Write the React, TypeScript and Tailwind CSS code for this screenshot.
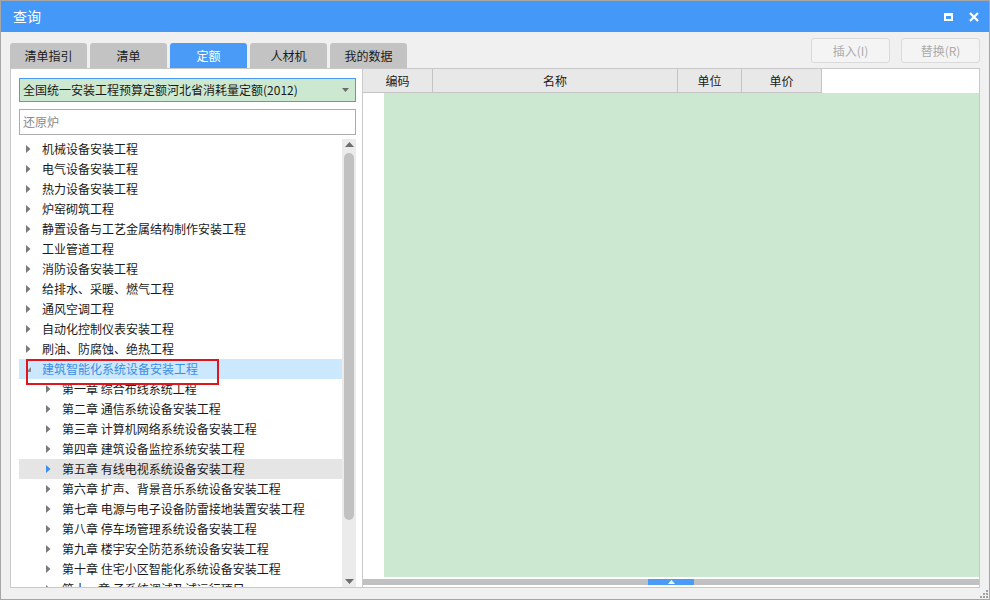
import React from "react";

const font = { fontFamily: '"Noto Sans CJK SC", "Noto Sans", sans-serif' };

const tabs = ["清单指引", "清单", "定额", "人材机", "我的数据"];

const topItems = [
  "机械设备安装工程",
  "电气设备安装工程",
  "热力设备安装工程",
  "炉窑砌筑工程",
  "静置设备与工艺金属结构制作安装工程",
  "工业管道工程",
  "消防设备安装工程",
  "给排水、采暖、燃气工程",
  "通风空调工程",
  "自动化控制仪表安装工程",
  "刷油、防腐蚀、绝热工程",
];

const chapters = [
  "第一章 综合布线系统工程",
  "第二章 通信系统设备安装工程",
  "第三章 计算机网络系统设备安装工程",
  "第四章 建筑设备监控系统安装工程",
  "第五章 有线电视系统设备安装工程",
  "第六章 扩声、背景音乐系统设备安装工程",
  "第七章 电源与电子设备防雷接地装置安装工程",
  "第八章 停车场管理系统设备安装工程",
  "第九章 楼宇安全防范系统设备安装工程",
  "第十章 住宅小区智能化系统设备安装工程",
  "第十一章 子系统调试及试运行项目",
];

function Arrow({ color = "#7a7a7a" }: { color?: string }) {
  return (
    <svg width="5" height="8" viewBox="0 0 5 8" className="shrink-0">
      <path d="M0 0 L4.5 4 L0 8 Z" fill={color} />
    </svg>
  );
}

function TreeRow({ text, level, hover }: { text: string; level: number; hover?: boolean }) {
  return (
    <div
      className={`flex h-[20px] items-center text-[12px] text-[#1a1a1a] ${hover ? "bg-[#e5e5e5]" : ""} ${
        level === 0 ? "pl-[7px]" : "pl-[27px]"
      }`}
    >
      <Arrow color={hover ? "#3c8ff0" : "#7a7a7a"} />
      <span className="ml-[11px] whitespace-nowrap">{text}</span>
    </div>
  );
}

export default function App() {
  return (
    <div
      style={font}
      className="relative flex h-[600px] w-[990px] flex-col overflow-hidden border border-[#a6a6a6] bg-[#f0f0f0]"
    >
      {/* title bar */}
      <div className="flex h-[31px] shrink-0 items-center bg-[#4398f8] pl-[12px] pr-[10px] text-white">
        <span className="text-[14px]">查询</span>
        <div className="ml-auto flex items-center gap-[16px]">
          <div className="h-[8px] w-[9px] border-2 border-t-[3px] border-white" />
          <svg width="10" height="10" viewBox="0 0 10 10">
            <path d="M1 1 L9 9 M9 1 L1 9" stroke="white" strokeWidth="2.2" />
          </svg>
        </div>
      </div>

      {/* toolbar row */}
      <div className="flex h-[36px] shrink-0 items-end pl-[9px] pr-[9px]">
        <div className="flex gap-[3px]">
          {tabs.map((t) => (
            <div
              key={t}
              className={`flex h-[25px] w-[77px] items-center justify-center rounded-t-[3px] text-[12px] ${
                t === "定额" ? "bg-[#4a9bf8] text-white" : "bg-[#c3c3c3] text-[#1a1a1a]"
              }`}
            >
              {t}
            </div>
          ))}
        </div>
        <div className="ml-auto flex gap-[11px] self-start pt-[6px]">
          {["插入(I)", "替换(R)"].map((b) => (
            <div
              key={b}
              className="flex h-[25px] w-[79px] items-center justify-center rounded-[3px] border border-[#dadada] bg-[#f4f4f4] text-[12px] text-[#ababab]"
            >
              {b}
            </div>
          ))}
        </div>
      </div>

      {/* main */}
      <div className="flex h-[520px] shrink-0 pl-[9px] pr-[9px]">
        {/* left panel */}
        <div className="flex w-[352px] flex-col border border-r-0 border-[#c9c9c9] bg-white pl-[8px] pr-[6px] pt-[9px]">
          <div className="flex h-[24px] items-center border border-[#4a9bf8] bg-[#cde8d1] pl-[3px] pr-[6px] text-[12px] text-[#1a1a1a]">
            <span>全国统一安装工程预算定额河北省消耗量定额(2012)</span>
            <svg width="7" height="4" viewBox="0 0 7 4" className="ml-auto">
              <path d="M0 0 H7 L3.5 4 Z" fill="#6a6a6a" />
            </svg>
          </div>
          <div className="mt-[7px] flex h-[26px] items-center border border-[#acacac] pl-[3px] text-[12px] text-[#8a8a8a]">
            还原炉
          </div>
          <div className="mt-[4px] flex min-h-0 flex-1">
            <div className="relative flex-1 overflow-hidden">
              {topItems.map((t) => (
                <TreeRow key={t} text={t} level={0} />
              ))}
              <div className="flex h-[20px] items-center bg-[#cce8ff] pl-[7px] text-[12px] text-[#3a8ee6]">
                <svg width="5" height="5" viewBox="0 0 5 5" className="shrink-0">
                  <path d="M5 0 V5 H0 Z" fill="#8a8a8a" />
                </svg>
                <span className="ml-[11px] whitespace-nowrap">建筑智能化系统设备安装工程</span>
              </div>
              {chapters.map((c) => (
                <TreeRow key={c} text={c} level={1} hover={c.startsWith("第五章")} />
              ))}
              <div className="pointer-events-none absolute left-[7px] top-[220px] h-[26px] w-[193px] border-2 border-[#e0161e]" />
            </div>
            {/* vertical scrollbar */}
            <div className="flex w-[14px] flex-col items-center bg-[#ebebeb] py-[3px]">
              <svg width="9" height="5" viewBox="0 0 9 5">
                <path d="M0 5 L4.5 0 L9 5 Z" fill="#6e6e6e" />
              </svg>
              <div className="mt-[6px] h-[367px] w-[10px] rounded-full bg-[#c1c1c1]" />
              <div className="flex-1" />
              <svg width="9" height="5" viewBox="0 0 9 5">
                <path d="M0 0 H9 L4.5 5 Z" fill="#6e6e6e" />
              </svg>
            </div>
          </div>
        </div>

        {/* right panel */}
        <div className="flex flex-1 flex-col border border-[#c9c9c9] bg-white">
          <div className="flex h-[24px] shrink-0">
            {[
              ["编码", "w-[70px]"],
              ["名称", "w-[245px]"],
              ["单位", "w-[64px]"],
              ["单价", "w-[80px]"],
            ].map(([t, w]) => (
              <div
                key={t}
                className={`${w} flex items-center justify-center border-b border-r border-[#c4c4c4] bg-[#e8e8e8] text-[12px] text-[#1a1a1a]`}
              >
                {t}
              </div>
            ))}
          </div>
          <div className="flex min-h-0 flex-1 pb-[2px]">
            <div className="w-[21px] shrink-0" />
            <div className="flex-1 bg-[#cde8d1]" />
          </div>
          <div className="flex h-[6px] shrink-0 justify-center bg-[#c1c1c1]">
            <div className="flex w-[46px] items-start justify-center bg-[#4a9bf8] pt-[1px]">
              <svg width="7" height="4" viewBox="0 0 7 4">
                <path d="M0 4 L3.5 0 L7 4 Z" fill="white" />
              </svg>
            </div>
          </div>
          <div className="h-[2px] shrink-0" />
        </div>
      </div>

      {/* resize grip */}
      <div className="absolute bottom-[1px] right-[1px] grid grid-cols-3 gap-[1px]">
        <div className="h-[2px] w-[2px]" />
        <div className="h-[2px] w-[2px]" />
        <div className="h-[2px] w-[2px] bg-[#a0a0a0]" />
        <div className="h-[2px] w-[2px]" />
        <div className="h-[2px] w-[2px] bg-[#a0a0a0]" />
        <div className="h-[2px] w-[2px] bg-[#a0a0a0]" />
        <div className="h-[2px] w-[2px] bg-[#a0a0a0]" />
        <div className="h-[2px] w-[2px] bg-[#a0a0a0]" />
        <div className="h-[2px] w-[2px] bg-[#a0a0a0]" />
      </div>
    </div>
  );
}
